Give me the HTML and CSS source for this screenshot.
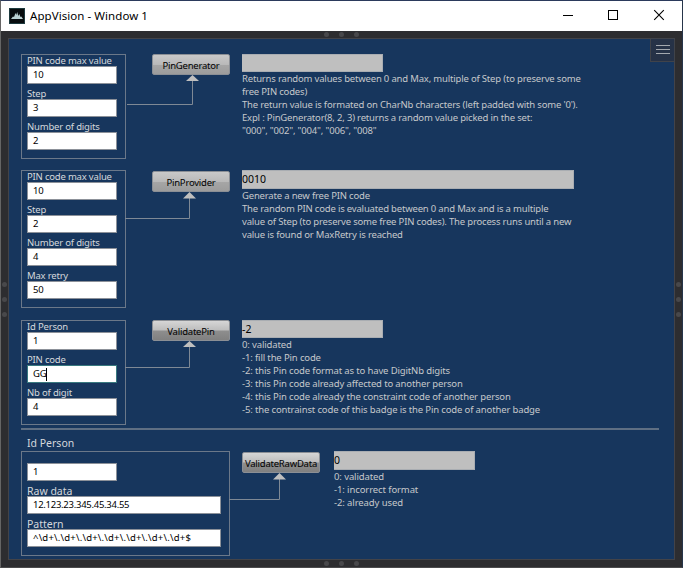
FILE: index.html
```html
<!DOCTYPE html>
<html lang="en">
<head>
<meta charset="utf-8">
<title>AppVision - Window 1</title>
<link rel="stylesheet" href="styles.css">
</head>
<body>
<div class="window">
  <header class="titlebar">
    <svg class="logo" width="16" height="16" viewBox="0 0 16 16"><rect x=".5" y=".5" width="15" height="15" fill="#080c0e" stroke="#1d3a3e"/><path d="M2 11 L4 8.500 L5 9 L6.500 5 L7.300 7 L8.200 4 L9.300 8 L10.300 6 L11.500 9 L12.300 8.500 L14 11Z" fill="#b9d0d2"/></svg>
    <h1 class="title">AppVision - Window 1</h1>
    <svg class="caption" width="138" height="30" viewBox="0 0 138 30" fill="none" stroke="#000"><path d="M19 14.500H29"/><rect x="64.500" y="9.500" width="9" height="9"/><path d="M110.200 9.200L119.800 18.800M119.800 9.200L110.200 18.800" stroke-width="1.100"/></svg>
  </header>
  <div class="frame">
    <div class="grip"><i></i><i></i><i></i></div>
    <div class="middle">
      <div class="grip side"><i></i><i></i><i></i></div>
      <main class="panel">
        <button class="menu"><svg width="14" height="9" viewBox="0 0 14 9" stroke="#a3a8ae"><path d="M0 .5H14M0 4.500H14M0 8.500H14"/></svg></button>
        <section class="row generator">
          <div class="group">
            <label class="field"><span class="name">PIN code max value</span><span class="input">10</span></label>
            <label class="field"><span class="name">Step</span><span class="input">3</span></label>
            <label class="field"><span class="name">Number of digits</span><span class="input">2</span></label>
          </div>
          <div class="action">
            <div class="btn">PinGenerator</div>
            <svg class="link" width="116" height="36" viewBox="0 0 116 36"><path class="wire" d="M1 29.500H66.500V5"/><path class="tip" d="M60 6L66.500 0L73 6Z"/></svg>
          </div>
          <div class="result">
            <div class="output short"></div>
            <p class="desc">Returns random values between 0 and Max, multiple of Step (to preserve some<br>free PIN codes)<br>The return value is formated on CharNb characters (left padded with some '0').<br>Expl : PinGenerator(8, 2, 3) returns a random value picked in the set:<br>"000", "002", "004", "006", "008"</p>
          </div>
        </section>
        <section class="row provider">
          <div class="group">
            <label class="field"><span class="name">PIN code max value</span><span class="input">10</span></label>
            <label class="field"><span class="name">Step</span><span class="input">2</span></label>
            <label class="field"><span class="name">Number of digits</span><span class="input">4</span></label>
            <label class="field"><span class="name">Max retry</span><span class="input">50</span></label>
          </div>
          <div class="action">
            <div class="btn">PinProvider</div>
            <svg class="link" width="116" height="36" viewBox="0 0 116 36"><path class="wire" d="M-1 26.500H63.500V5"/><path class="tip" d="M57 6.500L63.500 0L70 6.500Z"/></svg>
          </div>
          <div class="result">
            <div class="output long">0010</div>
            <p class="desc">Generate a new free PIN code<br>The random PIN code is evaluated between 0 and Max and is a multiple<br>value of Step (to preserve some free PIN codes). The process runs until a new<br>value is found or MaxRetry is reached</p>
          </div>
        </section>
        <section class="row validate">
          <div class="group">
            <label class="field"><span class="name">Id Person</span><span class="input">1</span></label>
            <label class="field"><span class="name">PIN code</span><span class="input focus">GG<i class="caret"></i></span></label>
            <label class="field"><span class="name">Nb of digit</span><span class="input">4</span></label>
          </div>
          <div class="action">
            <div class="btn dark">ValidatePin</div>
            <svg class="link" width="116" height="36" viewBox="0 0 116 36"><path class="wire" d="M-1 26.500H63.500V5"/><path class="tip" d="M57 6L63.500 0L70 6Z"/></svg>
          </div>
          <div class="result">
            <div class="output short">-2</div>
            <p class="desc">0: validated<br>-1: fill the Pin code<br>-2: this Pin code format as to have DigitNb digits<br>-3: this Pin code already affected to another person<br>-4: this Pin code already the constraint code of another person<br>-5: the contrainst code of this badge is the Pin code of another badge</p>
          </div>
        </section>
        <hr class="rule">
        <h2 class="heading">Id Person</h2>
        <section class="row raw">
          <div class="group wide">
            <label class="field"><span class="name"></span><span class="input">1</span></label>
            <label class="field"><span class="name">Raw data</span><span class="input full">12.123.23.345.45.34.55</span></label>
            <label class="field"><span class="name">Pattern</span><span class="input full pattern">^\d+\.\d+\.\d+\.\d+\.\d+\.\d+\.\d+$</span></label>
          </div>
          <div class="action">
            <div class="btn dark">ValidateRawData</div>
            <svg class="link" width="104" height="36" viewBox="0 0 104 36"><path class="wire" d="M-1 26.500H49.500V5"/><path class="tip" d="M43 6.500L49.500 0L56 6.500Z"/></svg>
          </div>
          <div class="result">
            <div class="output short">0</div>
            <p class="desc">0: validated<br>-1: incorrect format<br>-2: already used</p>
          </div>
        </section>
      </main>
      <div class="grip side"><i></i><i></i><i></i></div>
    </div>
    <div class="grip"><i></i><i></i><i></i></div>
  </div>
</div>
</body>
</html>
```

FILE: styles.css
```css
* { box-sizing: border-box; }
body { margin: 0; font-family: "Noto Sans", "Open Sans", sans-serif; font-size: 9.5px; }
.window { width: 683px; height: 568px; border: 1px solid #656565; border-top-color: #2b3a5c; border-right-color: #26354a; border-bottom-color: #4b4b4d; display: flex; flex-direction: column; overflow: hidden; background: #2d2d30; }
.titlebar { height: 30px; flex: none; background: #fff; display: flex; align-items: center; padding-left: 8px; }
.logo { flex: none; margin-top: -1px; }
.title { margin: 0 auto 0 5px; font-size: 11.5px; font-weight: 400; color: #000; line-height: 16px; white-space: nowrap; letter-spacing: .06px; }
.caption { flex: none; }
.frame { flex: 1; display: flex; flex-direction: column; }
.grip { height: 7px; flex: none; display: flex; align-items: center; justify-content: center; gap: 10px; }
.grip i { width: 5px; height: 5px; border-radius: 50%; background: #48484b; }
.middle { height: 522px; display: flex; }
.side { width: 7px; height: auto; flex-direction: column; }
.panel { position: relative; width: 667px; border: 1px solid #434348; background: #17365d; padding: 15px 0 0 12px; }
.menu { position: absolute; top: -1px; right: -1px; width: 25px; height: 24px; padding: 0 0 1px; border: 1px solid #40434a; background: #263247; display: flex; align-items: center; justify-content: center; }
.row { display: flex; align-items: flex-start; }
.generator { height: 116px; }
.provider { height: 150px; }
.validate { height: 108px; }
.raw { height: 105px; }
.group { width: 105px; flex: none; border: 1px solid #6b7889; padding: 0 0 8px 5px; height: 105px; }
.provider .group { height: 138px; }
.group.wide { width: 209px; }
.field { display: block; height: 33px; margin-top: -4px; }
.field + .field { margin-top: 0; }
.name { display: block; height: 15px; line-height: 19px; color: #d5d8dc; white-space: nowrap; font-size: 9.5px; letter-spacing: -.19px; }
.wide .name { font-size: 10.5px; letter-spacing: 0; line-height: 20px; }
.input { position: relative; display: flex; align-items: center; width: 90px; height: 18px; padding-left: 5px; border: 1px solid #8c9199; background: #fff; color: #000; font-size: 9.5px; line-height: 14px; white-space: nowrap; letter-spacing: -.27px; }
.input.full { width: 194px; }
.input.pattern { letter-spacing: .2px; }
.input.focus { border-color: #38797f; }
.caret { width: 1px; height: 13px; background: #000; }
.action { width: 116px; flex: none; display: flex; flex-direction: column; }
.raw .action { width: 104px; }
.btn { width: 78px; height: 21px; margin-left: 26px; border: 1px solid #8b8f95; border-radius: 2px; background: linear-gradient(#c9c9c9, #b9b9b9 50%, #a6a6a6 52%, #9c9c9c); color: #000; font-size: 9.5px; line-height: 21px; text-align: center; white-space: nowrap; letter-spacing: -.22px; }
.btn.dark { background: linear-gradient(#d6d6d6, #bdbdbd 48%, #8e8e8e 52%, #808080); }
.raw .btn { margin: 1px 0 0 12px; }
.provider .btn { margin-top: 1px; }
.link { display: block; overflow: visible; }
.wire { fill: none; stroke: #7f8995; }
.tip { fill: #bfbfbf; }
.result { flex: none; }
.output { height: 18px; border: 1px solid #a9adb2; border-left: 0; background: #bfbfbf; color: #000; font-size: 10.5px; line-height: 17px; }
.provider .output, .raw .output { height: 19px; }
.short { width: 141px; }
.long { width: 332px; }
.desc { margin: 0; line-height: 13px; font-size: 9.5px; color: #c6c8cb; white-space: nowrap; letter-spacing: -.18px; }
.validate .desc { letter-spacing: -.14px; }
.raw .desc { letter-spacing: -.1px; }
.rule { width: 638px; height: 2px; margin: 0; border: 0; background: #5f6f83; }
.heading { margin: 5px 0 0 6px; height: 16px; line-height: 16px; font-size: 10.5px; font-weight: 400; color: #d5d8dc; }
```
